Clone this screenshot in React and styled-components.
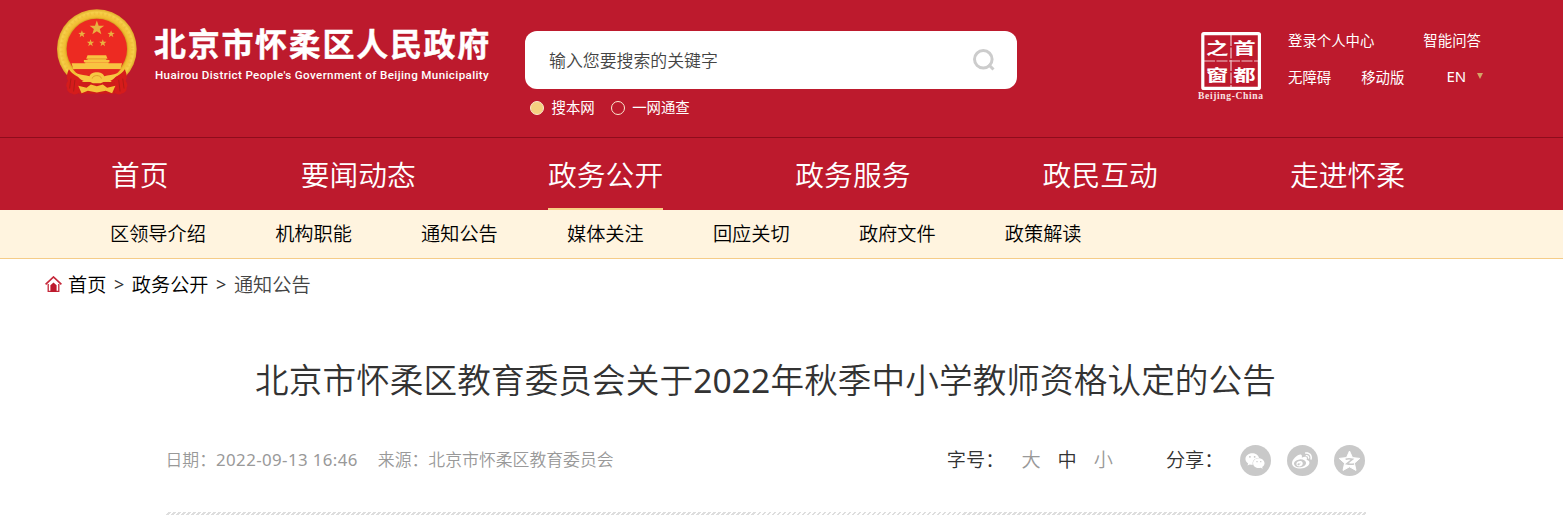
import React from "react";
import styled, { createGlobalStyle } from "styled-components";
import { FaWeixin, FaWeibo } from "react-icons/fa";

const navList = ["首页", "要闻动态", "政务公开", "政务服务", "政民互动", "走进怀柔"];

const subNavList = [
  "区领导介绍",
  "机构职能",
  "通知公告",
  "媒体关注",
  "回应关切",
  "政府文件",
  "政策解读",
];

const starPath =
  "M0 -10 L2.4 -3.2 L9.5 -3.1 L3.9 1.2 L5.9 8.1 L0 4 L-5.9 8.1 L-3.9 1.2 L-9.5 -3.1 L-2.4 -3.2 Z";

const Emblem = () => (
  <EmblemSvg viewBox="52 27 241 258">
    <defs>
      <radialGradient id="gold" cx="0.5" cy="0.5" r="0.5">
        <stop offset="0.74" stopColor="#c98a1c" />
        <stop offset="0.8" stopColor="#f0bb30" />
        <stop offset="0.92" stopColor="#f7d04a" />
        <stop offset="1" stopColor="#dfa928" />
      </radialGradient>
    </defs>
    <circle cx="172" cy="147" r="120" fill="url(#gold)" />
    <circle
      cx="172"
      cy="147"
      r="107"
      fill="none"
      stroke="#e5ab2c"
      strokeOpacity="0.3"
      strokeWidth="8"
      strokeDasharray="5 8"
    />
    <circle cx="172" cy="147" r="91" fill="#ed2a22" />
    <g fill="#e9b140">
      <path d={starPath} transform="translate(172 84) scale(2.3)" />
      <path d={starPath} transform="translate(127 102) scale(1.15)" />
      <path d={starPath} transform="translate(215 102) scale(1.15)" />
      <path d={starPath} transform="translate(153 129) scale(1.15)" />
      <path d={starPath} transform="translate(190 129) scale(1.15)" />
    </g>
    <g fill="#f8c441">
      <path d="M144 166 H200 L204 176 H140 Z" />
      <path d="M144 175 H200 V182 H144 Z" />
      <path d="M133 180 H210 V187 H133 Z" />
      <path d="M137 187 H207 V200 H137 Z" />
      <path d="M96 190 H248 L243 208 H101 Z" />
    </g>
    <path d="M140 177 H204" stroke="#dd8b24" strokeWidth="2" />
    <path d="M100 208 H244 L222 232 L172 240 L122 232 Z" fill="#e2271f" />
    <path
      d="M88 208 C98 224 120 236 140 236 L122 250 L118 279 C110 285 102 285 97 281 C89 281 80 272 83 264 C77 257 81 249 85 243 C79 230 83 219 88 208 Z"
      fill="#d51c1b"
    />
    <path
      d="M256 208 C246 224 224 236 204 236 L222 250 L226 279 C234 285 242 285 247 281 C255 281 264 272 261 264 C267 257 263 249 259 243 C265 230 261 219 256 208 Z"
      fill="#d51c1b"
    />
    <path d="M118 246 H226 V282 H118 Z" fill="#cf1d1a" />
    <path
      d="M108 219 C124 226 138 225 150 229 C154 213 190 213 194 229 C206 225 220 226 236 219 C228 236 212 247 198 243 L184 250 H160 L146 243 C132 247 116 236 108 219 Z"
      fill="#f7c843"
    />
    <path
      d="M116 258 L141 264 L154 254 L172 259 L190 254 L203 264 L228 258 L218 280 L199 273 L172 278 L145 273 L126 280 Z"
      fill="#f5c23a"
    />
    <g fill="none" stroke="#a91b16" strokeWidth="2.5">
      <path d="M94 236 L90 266 M106 240 L102 275 M250 236 L254 266 M238 240 L242 275" />
      <path d="M158 236 C160 224 184 224 186 236" stroke="#dc9128" />
    </g>
  </EmblemSvg>
);

const SealLogo = () => (
  <SealSvg viewBox="0 0 66 72">
    <rect x="4.8" y="2.6" width="56.6" height="54.8" rx="1" fill="none" stroke="#fff" strokeWidth="3.2" />
    <path d="M33 4V57M6 30H60" stroke="#fff" strokeOpacity="0.75" strokeWidth="1.2" strokeDasharray="11 1.5" />
    <g fill="#fff" fontFamily="'Noto Sans CJK SC', sans-serif" fontWeight="700" textAnchor="middle">
      <text transform="translate(19.2 22.8) scale(1.12 0.78)" fontSize="20">之</text>
      <text transform="translate(46.4 22.8) scale(1.12 0.78)" fontSize="20">首</text>
      <text transform="translate(19.2 49.8) scale(1.12 0.8)" fontSize="20">窗</text>
      <text transform="translate(46.4 49.8) scale(1.12 0.8)" fontSize="20">都</text>
    </g>
    <text
      x="0"
      y="67.5"
      fill="#fbe3e5"
      fontFamily="'Liberation Serif', serif"
      fontWeight="700"
      fontSize="9.5"
      textLength="65"
    >
      Beijing-China
    </text>
  </SealSvg>
);

const SearchIcon = () => (
  <svg width="24" height="24" viewBox="0 0 24 24" fill="none" stroke="#ccc">
    <circle cx="11.3" cy="11.3" r="8.8" strokeWidth="3" />
    <path d="M16.5 16.5L21.5 21.5" strokeWidth="3" />
  </svg>
);

const HomeIcon = () => (
  <svg width="17" height="17" viewBox="0 0 17 17" fill="none" stroke="#c5283a">
    <path d="M0.6 8.4L8.5 1L16.4 8.4" strokeWidth="1.7" />
    <path d="M3.2 8V15.4H13.8V8" strokeWidth="1.3" />
    <path d="M5.4 16V9.2L8.5 6.6L11.6 9.2V16Z" fill="#bd1a2d" stroke="none" />
  </svg>
);

const QzoneIcon = () => (
  <svg width="23" height="22" viewBox="0 0 23 22">
    <path
      d="M11.5 1L14.5 7.6L21.8 8.4L16.4 13.2L18 20.4L11.5 16.8L5 20.4L6.6 13.2L1.2 8.4L8.5 7.6Z"
      fill="#fff"
      stroke="#fff"
      strokeLinejoin="round"
    />
    <path d="M7.6 9.2Q11 8.4 14.6 9.2L8.6 13.8Q12 14.7 16 14" fill="none" stroke="#c9c9c9" strokeWidth="1.5" />
  </svg>
);

const App = () => {
  return (
    <>
      <GlobalStyle />
      <Header>
        <Brand>
          <Emblem />
          <BrandText>
            <BrandName>北京市怀柔区人民政府</BrandName>
            <BrandEn>Huairou District People's Government of Beijing Municipality</BrandEn>
          </BrandText>
        </Brand>
        <SearchArea>
          <SearchBox>
            <span>输入您要搜索的关键字</span>
            <SearchIcon />
          </SearchBox>
          <RadioRow>
            <Radio>
              <Dot $checked />
              搜本网
            </Radio>
            <Radio>
              <Dot />
              一网通查
            </Radio>
          </RadioRow>
        </SearchArea>
        <SealLogo />
        <Links>
          <LinkRow>
            <span>登录个人中心</span>
            <LinkItem $left={49}>智能问答</LinkItem>
          </LinkRow>
          <LinkRow>
            <span>无障碍</span>
            <LinkItem $left={30}>移动版</LinkItem>
            <LangItem $left={42}>EN</LangItem>
            <Caret />
          </LinkRow>
        </Links>
      </Header>
      <Nav>
        {navList.map((item) => (
          <NavItem key={item} $active={item === "政务公开"}>
            {item}
          </NavItem>
        ))}
      </Nav>
      <SubNav>
        {subNavList.map((item) => (
          <span key={item}>{item}</span>
        ))}
      </SubNav>
      <Crumbs>
        <HomeIcon />
        <Crumb>首页</Crumb>
        <Arrow>&gt;</Arrow>
        <Crumb>政务公开</Crumb>
        <Arrow>&gt;</Arrow>
        <Crumb $current>通知公告</Crumb>
      </Crumbs>
      <Article>
        <Title>
          北京市怀柔区教育委员会关于<Digits>2022</Digits>年秋季中小学教师资格认定的公告
        </Title>
        <Meta>
          <MetaInfo>
            <span>
              日期：<DateText>2022-09-13 16:46</DateText>
            </span>
            <span>来源：北京市怀柔区教育委员会</span>
          </MetaInfo>
          <Tools>
            <ToolLabel>字号：</ToolLabel>
            <FontSizes>
              <FontSize>大</FontSize>
              <FontSize $active>中</FontSize>
              <FontSize>小</FontSize>
            </FontSizes>
            <ToolLabel>分享：</ToolLabel>
            <ShareList>
              <Share>
                <FaWeixin size={20} />
              </Share>
              <Share>
                <FaWeibo size={20} />
              </Share>
              <Share>
                <QzoneIcon />
              </Share>
            </ShareList>
          </Tools>
        </Meta>
        <Stripe />
      </Article>
    </>
  );
};

const GlobalStyle = createGlobalStyle`
  * {
    box-sizing: border-box;
  }

  body {
    margin: 0;
    overflow: hidden;
    background: #fff;
    font-family: "Noto Sans", "Noto Sans CJK SC", sans-serif;
    font-weight: 350;
    white-space: nowrap;
  }
`;

const Header = styled.header`
  display: flex;
  align-items: flex-start;
  height: 138px;
  padding-left: 57px;
  color: #fff;
  background: #bd1a2d;
  border-bottom: 1px solid #8f0c1c;
`;

const Brand = styled.div`
  display: flex;
  width: 468px;
  padding-top: 9px;
`;

const EmblemSvg = styled.svg`
  flex: none;
  width: 80px;
  height: 86px;
`;

const BrandText = styled.div`
  margin-left: 17px;
  padding-top: 13px;
`;

const BrandName = styled.div`
  font-family: "Noto Sans CJK SC", sans-serif;
  font-size: 32px;
  font-weight: 700;
  line-height: 40px;
  letter-spacing: 1.7px;
  -webkit-text-stroke: 0.4px #fff;
`;

const BrandEn = styled.div`
  margin: 5px 0 0 1px;
  font-family: Roboto, sans-serif;
  font-size: 11.6px;
  font-weight: 500;
  line-height: 16px;
  letter-spacing: 0.38px;
`;

const SearchArea = styled.div`
  width: 492px;
  padding-top: 31px;
`;

const SearchBox = styled.div`
  display: flex;
  align-items: center;
  justify-content: space-between;
  height: 58px;
  padding: 0 21px 2px 24px;
  color: #444;
  font-size: 16.9px;
  background: #fff;
  border-radius: 12px;

  svg {
    margin-top: 2px;
  }
`;

const RadioRow = styled.div`
  display: flex;
  gap: 16px;
  padding: 9px 0 0 5px;
  font-size: 14.4px;
  font-weight: 400;
  line-height: 20px;
`;

const Radio = styled.div`
  display: flex;
  align-items: center;
  gap: 7.5px;
`;

const Dot = styled.span`
  width: 14px;
  height: 14px;
  border: 1.5px solid #fbe9d0;
  border-radius: 50%;
  background: ${({ $checked }) => ($checked ? "#f5d080" : "transparent")};
`;

const SealSvg = styled.svg`
  flex: none;
  width: 66px;
  height: 72px;
  margin: 31px 24px 0 181px;
`;

const Links = styled.div`
  padding-top: 28px;
  font-size: 14.4px;
  font-weight: 400;
`;

const LinkRow = styled.div`
  display: flex;
  align-items: center;
  height: 22px;
  margin-bottom: 15px;
`;

const LinkItem = styled.span`
  margin-left: ${({ $left }) => $left}px;
`;

const LangItem = styled(LinkItem)`
  font-size: 15px;
`;

const Caret = styled.span`
  margin-left: 11px;
  border: 3px solid transparent;
  border-top: 6px solid #d3a566;
  border-bottom: 0;
`;

const Nav = styled.nav`
  display: flex;
  gap: 132.1px;
  height: 72px;
  padding-left: 111px;
  color: #fff;
  font-size: 28.8px;
  line-height: 74px;
  background: #bd1a2d;
`;

const NavItem = styled.div`
  height: 72px;
  border-bottom: 2px solid ${({ $active }) => ($active ? "#f7cf85" : "transparent")};
`;

const SubNav = styled.div`
  display: flex;
  gap: 69.2px;
  height: 49px;
  padding-left: 110px;
  color: #000;
  font-size: 19.2px;
  line-height: 48px;
  background: #fff4df;
  border-bottom: 1px solid #f5cc88;
`;

const Crumbs = styled.div`
  display: flex;
  align-items: center;
  height: 50px;
  padding-left: 45px;
  font-size: 19.2px;
`;

const Crumb = styled.span`
  color: ${({ $current }) => ($current ? "#444" : "#000")};

  svg + & {
    margin-left: 6px;
  }
`;

const Arrow = styled.span`
  width: 25.4px;
  text-align: center;
  color: #333;
  font-size: 18px;
  font-weight: 400;
`;

const Article = styled.article`
  width: 1200px;
  margin-left: 165.5px;
`;

const Title = styled.h1`
  margin: 0;
  padding-top: 46px;
  color: #333;
  font-size: 33.6px;
  font-weight: 350;
  line-height: 50px;
  letter-spacing: 0.12px;
  text-align: center;
`;

const Digits = styled.span`
  font-weight: 400;
`;

const Meta = styled.div`
  display: flex;
  justify-content: space-between;
  height: 107px;
  padding-top: 40px;
`;

const MetaInfo = styled.div`
  display: flex;
  gap: 20px;
  color: #999;
  font-size: 16.85px;
  line-height: 29px;
`;

const DateText = styled.span`
  font-weight: 400;
  letter-spacing: 0.4px;
`;

const Tools = styled.div`
  display: flex;
  font-size: 19.2px;
  line-height: 30px;
`;

const ToolLabel = styled.span`
  color: #333;
`;

const FontSizes = styled.div`
  display: flex;
  gap: 17px;
  margin: 0 53px 0 17px;
`;

const FontSize = styled.span`
  color: ${({ $active }) => ($active ? "#333" : "#999")};
`;

const ShareList = styled.div`
  display: flex;
  gap: 16px;
  margin: 0 1px 0 16px;
`;

const Share = styled.span`
  display: flex;
  align-items: center;
  justify-content: center;
  width: 31px;
  height: 31px;
  color: #fff;
  background: #c9c9c9;
  border-radius: 50%;
`;

const Stripe = styled.div`
  height: 3px;
  background: repeating-linear-gradient(135deg, #fff 0 1.6px, #dedede 1.6px 3.54px);
`;

export default App;
